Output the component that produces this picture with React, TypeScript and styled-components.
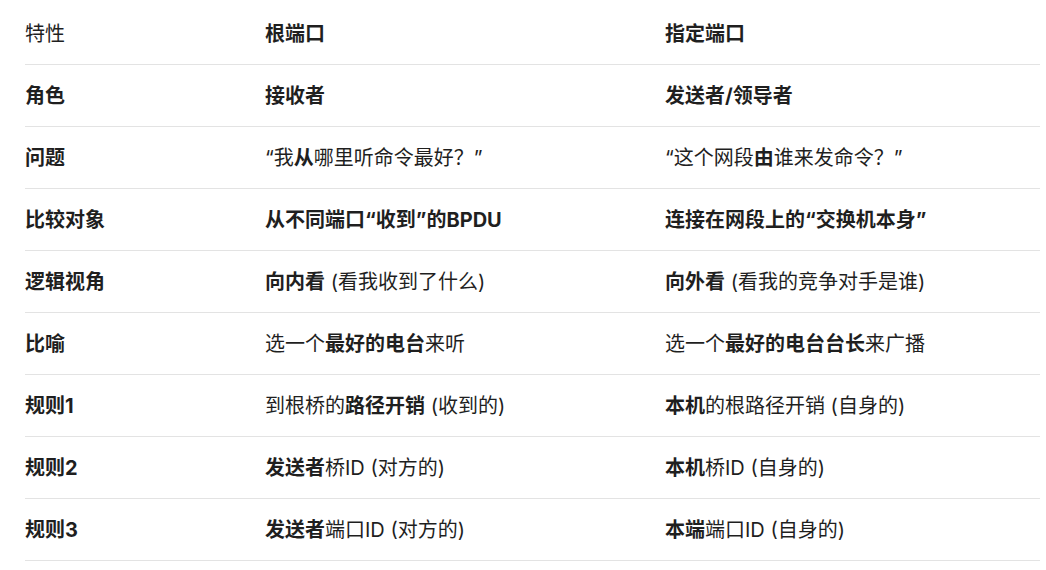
import * as React from 'react';
import styled, {createGlobalStyle} from 'styled-components';

const GlobalStyle = createGlobalStyle`
    body {
        margin: 0;
        background: #ffffff;
        font-family: "Inter", "Noto Sans CJK SC", sans-serif;
        color: #1f1f1f;
    }
`

const Wrapper = styled.div`
    padding: 3px 6px 0 25px;
`

const Row = styled.div`
    display: grid;
    grid-template-columns: 240px 400px 1fr;
    align-items: center;
    height: 61px;
    border-bottom: 1px solid #e3e3e3;
    font-size: 20px;
`

const Cell = styled.div<{$strong?: boolean}>`
    font-weight: ${p => (p.$strong ? 700 : 400)};
    white-space: nowrap;
    line-height: 26px;
    padding-top: 1px;
`

const B = styled.b`
    font-weight: 700;
`

type RowData = {label: React.ReactNode; labelBold?: boolean; root: React.ReactNode; designated: React.ReactNode};

const rows: RowData[] = [
    {label: '特性', root: <B>根端口</B>, designated: <B>指定端口</B>},
    {label: '角色', labelBold: true, root: <B>接收者</B>, designated: <B>发送者/领导者</B>},
    {
        label: '问题',
        labelBold: true,
        root: <>“我<B>从</B>哪里听命令最好？”</>,
        designated: <>“这个网段<B>由</B>谁来发命令？”</>,
    },
    {
        label: '比较对象',
        labelBold: true,
        root: <B>从不同端口“收到”的BPDU</B>,
        designated: <B>连接在网段上的“交换机本身”</B>,
    },
    {
        label: '逻辑视角',
        labelBold: true,
        root: <><B>向内看</B> (看我收到了什么)</>,
        designated: <><B>向外看</B> (看我的竞争对手是谁)</>,
    },
    {
        label: '比喻',
        labelBold: true,
        root: <>选一个<B>最好的电台</B>来听</>,
        designated: <>选一个<B>最好的电台台长</B>来广播</>,
    },
    {
        label: '规则1',
        labelBold: true,
        root: <>到根桥的<B>路径开销</B> (收到的)</>,
        designated: <><B>本机</B>的根路径开销 (自身的)</>,
    },
    {
        label: '规则2',
        labelBold: true,
        root: <><B>发送者</B>桥ID (对方的)</>,
        designated: <><B>本机</B>桥ID (自身的)</>,
    },
    {
        label: '规则3',
        labelBold: true,
        root: <><B>发送者</B>端口ID (对方的)</>,
        designated: <><B>本端</B>端口ID (自身的)</>,
    },
];

export default function App() {
    return (
        <>
            <GlobalStyle />
            <Wrapper>
                {rows.map((r, i) => (
                    <Row key={i}>
                        <Cell $strong={r.labelBold}>{r.label}</Cell>
                        <Cell>{r.root}</Cell>
                        <Cell>{r.designated}</Cell>
                    </Row>
                ))}
            </Wrapper>
        </>
    );
}
